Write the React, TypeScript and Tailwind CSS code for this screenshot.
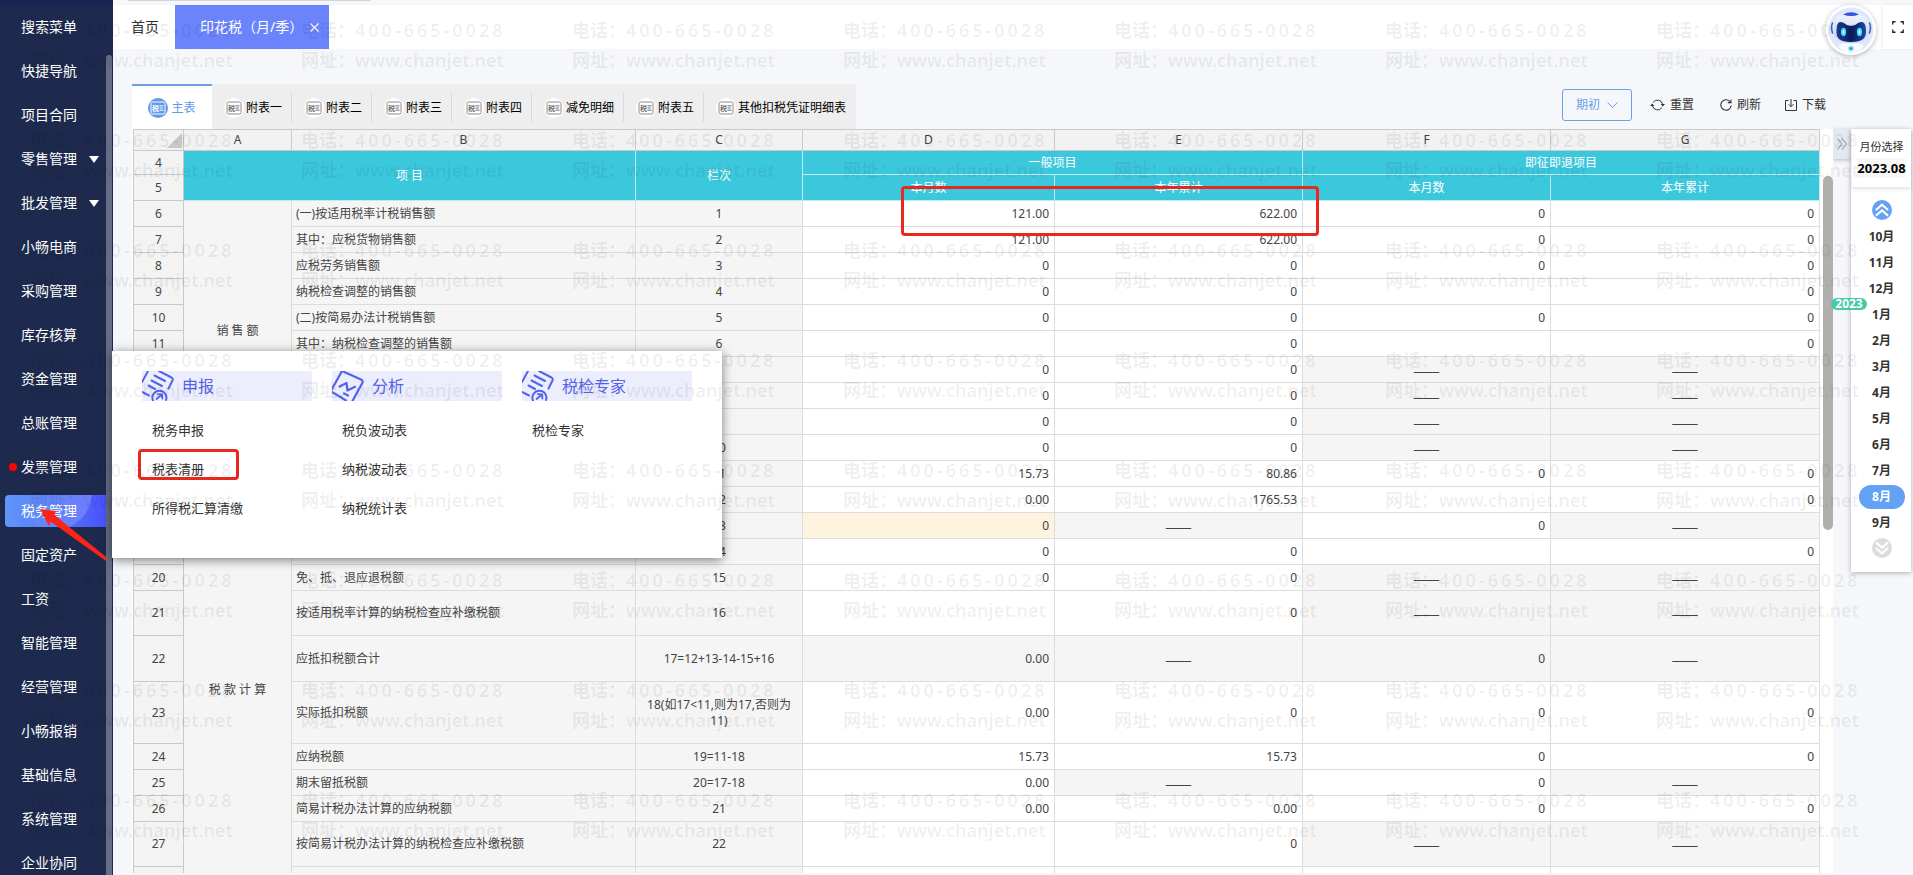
import React from "react";

type CellValue = string;

interface SheetRow {
  no: number;
  height: string;
  group?: { text: string; span: number };
  label: string;
  line: string;
  values: CellValue[];
  shade?: string;
}

const DASH = "——";

const menu: { text: string; arrow?: boolean; dot?: boolean; active?: boolean }[] = [
  { text: "快捷导航" },
  { text: "项目合同" },
  { text: "零售管理", arrow: true },
  { text: "批发管理", arrow: true },
  { text: "小畅电商" },
  { text: "采购管理" },
  { text: "库存核算" },
  { text: "资金管理" },
  { text: "总账管理" },
  { text: "发票管理", dot: true },
  { text: "税务管理", active: true },
  { text: "固定资产" },
  { text: "工资" },
  { text: "智能管理" },
  { text: "经营管理" },
  { text: "小畅报销" },
  { text: "基础信息" },
  { text: "系统管理" },
  { text: "企业协同" },
];

const sheetTabs = ["附表一", "附表二", "附表三", "附表四", "减免明细", "附表五", "其他扣税凭证明细表"];

const H = "h-[26px]";

/* shade: one letter per value column; w = white, g = grey, y = yellow */
const rows: SheetRow[] = [
  { no: 6, height: H, group: { text: "销 售 额", span: 10 }, label: "(一)按适用税率计税销售额", line: "1", values: ["121.00", "622.00", "0", "0"] },
  { no: 7, height: H, label: "其中：应税货物销售额", line: "2", values: ["121.00", "622.00", "0", "0"] },
  { no: 8, height: H, label: "应税劳务销售额", line: "3", values: ["0", "0", "0", "0"] },
  { no: 9, height: H, label: "纳税检查调整的销售额", line: "4", values: ["0", "0", "", "0"] },
  { no: 10, height: H, label: "(二)按简易办法计税销售额", line: "5", values: ["0", "0", "0", "0"] },
  { no: 11, height: H, label: "其中：纳税检查调整的销售额", line: "6", values: ["", "0", "", "0"] },
  { no: 12, height: H, label: "(三)免、抵、退办法出口销售额", line: "7", values: ["0", "0", DASH, DASH] },
  { no: 13, height: H, label: "(四)免税销售额", line: "8", values: ["0", "0", DASH, DASH] },
  { no: 14, height: H, label: "其中：免税货物销售额", line: "9", values: ["0", "0", DASH, DASH] },
  { no: 15, height: H, label: "免税劳务销售额", line: "10", values: ["0", "0", DASH, DASH] },
  { no: 16, height: H, group: { text: "税 款 计 算", span: 13 }, label: "销项税额", line: "11", values: ["15.73", "80.86", "0", "0"] },
  { no: 17, height: H, label: "进项税额", line: "12", values: ["0.00", "1765.53", "", "0"] },
  { no: 18, height: H, label: "上期留抵税额", line: "13", values: ["0", DASH, "0", DASH], shade: "ygwg" },
  { no: 19, height: H, label: "进项税额转出", line: "14", values: ["0", "0", "", "0"] },
  { no: 20, height: H, label: "免、抵、退应退税额", line: "15", values: ["0", "0", DASH, DASH] },
  { no: 21, height: "h-[45px]", label: "按适用税率计算的纳税检查应补缴税额", line: "16", values: ["", "0", DASH, DASH] },
  { no: 22, height: "h-[46px]", label: "应抵扣税额合计", line: "17=12+13-14-15+16", values: ["0.00", DASH, "0", DASH], shade: "gggg" },
  { no: 23, height: "h-[62px]", label: "实际抵扣税额", line: "18(如17<11,则为17,否则为11)", values: ["0.00", "0", "0", "0"] },
  { no: 24, height: H, label: "应纳税额", line: "19=11-18", values: ["15.73", "15.73", "0", "0"] },
  { no: 25, height: H, label: "期末留抵税额", line: "20=17-18", values: ["0.00", DASH, "0", DASH] },
  { no: 26, height: H, label: "简易计税办法计算的应纳税额", line: "21", values: ["0.00", "0.00", "0", "0"] },
  { no: 27, height: "h-[45px]", label: "按简易计税办法计算的纳税检查应补缴税额", line: "22", values: ["", "0", DASH, DASH] },
];

const months = ["10月", "11月", "12月", "1月", "2月", "3月", "4月", "5月", "6月", "7月", "8月", "9月"];

function FormIcon({ active = false }: { active?: boolean }) {
  const ink = active ? "#ffffff" : "#6f6f6f";
  return (
    <svg className="size-5 shrink-0" viewBox="0 0 20 20" aria-hidden="true">
      <circle cx="10" cy="10" r="10" fill={active ? "#5b9be8" : "#ffffff"} />
      <rect x="3" y="4" width="14" height="12" rx="1.5" fill="none" stroke={active ? "#ffffff" : "#8c8c8c"} />
      <text x="4" y="12.6" fontSize="7" fill={ink} fontFamily="Noto Sans CJK SC, sans-serif" fontWeight="700">
        税
      </text>
      <path d="M11.5 7.8h4M11.5 10h3.4M11.5 12.2h4" stroke={ink} strokeWidth="1" />
    </svg>
  );
}

function DeclareIcon() {
  return (
    <svg className="h-[30px] w-8 shrink-0" viewBox="0 0 32 30" fill="none" stroke="#5463ec" strokeWidth="2" strokeLinecap="round" strokeLinejoin="round" aria-hidden="true">
      <path d="M6 0L0 11M0 21L7 24.500M17 0L29.500 6.500Q31.500 7.700 30.500 9.500L26.500 17.500" />
      <path d="M12.500 4.500L23 10M9.500 9.500L20 15M6.500 14.500L13 18" />
      <path d="M11 29.500A7 7 0 1 1 24 29" />
      <path d="M14.500 28L20 23.500M15.800 23.200L20.200 23.300L20.400 27.500" strokeWidth="1.800" />
    </svg>
  );
}

function AnalyseIcon() {
  return (
    <svg className="h-[30px] w-8 shrink-0" viewBox="0 0 32 30" fill="none" stroke="#5463ec" strokeWidth="2.200" strokeLinecap="round" strokeLinejoin="round" aria-hidden="true">
      <path d="M10 0L29 8.500Q31.500 9.800 30.300 12L20.500 30M10 0L0 18M0 21L14 29.500" />
      <path d="M7.500 15.500L14.500 12L15.500 19.500L23 15.800" />
      <path d="M12 22.500L16 24.500" />
    </svg>
  );
}

function Robot() {
  return (
    <svg className="size-full" viewBox="0 0 50 50" aria-hidden="true">
      <defs>
        <linearGradient id="shell" x1="0" y1="0" x2="0" y2="1">
          <stop offset="0" stopColor="#f3f6ff" />
          <stop offset="1" stopColor="#c3d0f4" />
        </linearGradient>
        <linearGradient id="visor" x1="0" y1="0" x2="1" y2="0">
          <stop offset="0" stopColor="#1a3f96" />
          <stop offset="0.500" stopColor="#0a1c5c" />
          <stop offset="1" stopColor="#1b48a8" />
        </linearGradient>
      </defs>
      <circle cx="25" cy="25" r="25" fill="#ffffff" />
      <circle cx="25" cy="25" r="22.500" fill="#dfe7fa" />
      <path d="M12 41Q25 33 38 41Q33 47.500 25 47.500Q17 47.500 12 41z" fill="#f9fbff" />
      <ellipse cx="25" cy="23" rx="19" ry="15.500" fill="url(#shell)" />
      <path d="M6.500 18Q4.500 22 6.500 28M43.500 18Q45.500 22 43.500 28" stroke="#3b62c9" strokeWidth="1.600" fill="none" strokeLinecap="round" />
      <path d="M17 9.500Q25 5 33 9.500Q25 12.500 17 9.500z" fill="#2f57dc" />
      <path d="M11 21Q12 15 18 18Q21 21 25 21Q29 21 32 18Q38 15 39.500 21Q42 34 33 36Q25 38 17 36Q8.500 34 11 21z" fill="url(#visor)" />
      <ellipse cx="17.500" cy="27" rx="2.600" ry="4.200" fill="#3fd6f8" />
      <ellipse cx="33.500" cy="27" rx="2.600" ry="4.200" fill="#3fd6f8" />
      <ellipse cx="17.500" cy="27" rx="1" ry="2.200" fill="#c9f8ff" />
      <ellipse cx="33.500" cy="27" rx="1" ry="2.200" fill="#c9f8ff" />
      <circle cx="25" cy="43.500" r="3" fill="#a7e2fa" />
      <circle cx="25" cy="43.500" r="1.500" fill="#1e9be0" />
    </svg>
  );
}

function Sidebar() {
  return (
    <aside className="flex w-[113px] shrink-0 flex-col overflow-hidden bg-[#1d2a4d] text-sm text-white">
      <div className="h-[5px] shrink-0 bg-[#1a2452]" />
      <button type="button" className="h-11 shrink-0 pl-[21px] text-left">
        搜索菜单
      </button>
      <div className="flex min-h-0 flex-1">
        <nav className="min-w-0 flex-1 overflow-hidden">
          <ul>
            {menu.map((m) => (
              <li key={m.text} className="flex h-11 items-center pl-[5px]">
                <a
                  href="#"
                  className={
                    m.active
                      ? "relative flex h-8 flex-1 items-center overflow-hidden rounded-l-sm bg-linear-to-r from-[#6196f9] to-[#4a52fb] pl-4"
                      : "relative flex h-8 flex-1 items-center pl-4"
                  }
                >
                  {m.active && <span className="absolute -top-10 left-3 size-[75px] rounded-full bg-linear-to-r from-white/0 to-white/20" />}
                  {m.dot && <span className="absolute left-1 size-2 rounded-full bg-[#fb0404]" />}
                  <span className="relative">{m.text}</span>
                  {m.arrow && (
                    <svg className="ml-3 h-[7px] w-2.5" viewBox="0 0 10 7" aria-hidden="true">
                      <path d="M0 0H10L5 7z" fill="#fff" />
                    </svg>
                  )}
                </a>
              </li>
            ))}
          </ul>
        </nav>
        <div className="mt-1.5 mr-px w-1.5 rounded-t-full bg-[#646c86]" />
      </div>
    </aside>
  );
}

function TopBar() {
  return (
    <header className="shrink-0">
      <div className="h-[5px] pl-[15px]">
        <div className="h-px w-[243px] bg-[#d6d6da]" />
      </div>
      <div className="flex h-11 items-stretch bg-white text-sm">
        <a href="#" className="flex items-center pr-4 pl-[18px] text-[#333]">
          首页
        </a>
        <div className="flex items-center bg-[#6b84fb] pr-2.5 pl-[25px] text-white">
          <a href="#">印花税（月/季）</a>
          <button type="button" aria-label="关闭" className="ml-[7px]">
            <svg className="size-[9px]" viewBox="0 0 9 9" aria-hidden="true">
              <path d="M0.500 0.500L8.500 8.500M8.500 0.500L0.500 8.500" stroke="#fff" strokeWidth="1.200" />
            </svg>
          </button>
        </div>
        <div className="relative ml-auto w-[50px]">
          <button type="button" aria-label="智能助手" className="absolute top-0 left-0 size-[50px] rounded-full shadow-[0_1px_5px_rgba(0,0,0,0.3)]">
            <Robot />
          </button>
        </div>
        <button type="button" aria-label="全屏" className="ml-[7px] flex w-[30px] items-center justify-center bg-white shadow-[-1px_0_3px_rgba(0,0,0,0.08)]">
          <svg className="size-3" viewBox="0 0 12 12" fill="none" stroke="#222" strokeWidth="1.300" aria-hidden="true">
            <path d="M0.750 3.500V0.750H3.500M8.500 0.750H11.250V3.500M11.250 8.500V11.250H8.500M3.500 11.250H0.750V8.500" />
          </svg>
        </button>
      </div>
    </header>
  );
}

function SheetToolbar() {
  return (
    <div className="flex h-[45px] shrink-0 items-stretch justify-between pr-[7px] text-xs">
      <div className="flex bg-[#eeeeee]" role="tablist">
        <button type="button" role="tab" aria-selected="true" className="flex w-20 items-center justify-center gap-[3px] border-t-2 border-[#6ba0e6] bg-white text-[#5b9be8]">
          <FormIcon active />
          主表
        </button>
        {sheetTabs.map((t, i) => (
          <button key={t} type="button" role="tab" aria-selected="false" className="relative flex items-center gap-0.5 pt-0.5 pr-2.5 pl-3 text-black">
            <FormIcon />
            {t}
            {i < sheetTabs.length - 1 && <span className="absolute top-2 right-0 h-[30px] w-px bg-[#dadada]" />}
          </button>
        ))}
      </div>
      <div className="flex items-center pb-1 text-[#333]">
        <button type="button" className="mr-[18px] flex h-8 items-center gap-[7px] rounded-[3px] border border-[#6ba0e6] px-[13px] text-[#6ba0e6]">
          期初
          <svg className="h-1.5 w-[11px]" viewBox="0 0 11 6" fill="none" stroke="#6ba0e6" aria-hidden="true">
            <path d="M0.500 0.500L5.500 5.300L10.500 0.500" />
          </svg>
        </button>
        <button type="button" className="mr-[26px] flex items-center gap-[5px]">
          <svg className="h-3 w-[15px]" viewBox="0 0 15 12" fill="none" stroke="#333" aria-hidden="true">
            <path d="M3.200 3.300A5.200 5.200 0 0 1 12.600 5.500M11.800 8.700A5.200 5.200 0 0 1 2.400 6.500" />
            <path d="M10.700 5H15L12.800 7.600zM4.300 7H0L2.200 4.400z" fill="#333" stroke="none" />
          </svg>
          重置
        </button>
        <button type="button" className="mr-6 flex items-center gap-[5px]">
          <svg className="size-3" viewBox="0 0 12 12" fill="none" stroke="#333" strokeWidth="1.100" aria-hidden="true">
            <path d="M10.400 3.200A5.200 5.200 0 1 0 11.200 6.500" />
            <path d="M11 0.500V3.600H7.800" />
          </svg>
          刷新
        </button>
        <button type="button" className="flex items-center gap-[5px]">
          <svg className="size-3" viewBox="0 0 12 12" fill="none" stroke="#333" strokeWidth="1" aria-hidden="true">
            <path d="M3.500 1.500H0.500V11.500H11.500V1.500H8.500M6 0V7.500M3.500 5.200L6 7.700L8.500 5.200" />
          </svg>
          下载
        </button>
      </div>
    </div>
  );
}

function valueClass(value: string, shade?: string) {
  const fill = shade === "y" ? "bg-[#fdf3df] " : shade === "g" || (!shade && value === DASH) ? "bg-[#f5f5f5] " : "bg-white ";
  return (
    fill +
    (value === DASH
      ? "border-r border-b border-[#dcdcdc] text-center font-['Noto_Sans_CJK_SC',sans-serif] text-base leading-4"
      : "border-r border-b border-[#dcdcdc] pr-[5px] text-right")
  );
}

const letterCell = "h-[22px] border-t border-r border-b border-[#c9c9c9] bg-[#f2f2f2] font-normal";
const rowHead = "border-r border-b border-l border-[#c9c9c9] bg-[#f3f3f3] font-normal";
const teal = "border-r border-b border-[#bfeaf1] bg-[#3cc8dc] font-normal text-white";
const labelCell = "border-r border-b border-[#dcdcdc] bg-[#f5f5f5]";

function Sheet() {
  return (
    <div className="relative mb-0.5 flex min-h-0 flex-1 bg-white">
      <div className="min-w-0 flex-1 overflow-hidden pl-px">
        <table className="w-full table-fixed border-separate border-spacing-0 text-xs leading-4 text-[#444]">
          <colgroup>
            <col className="w-[51px]" />
            <col className="w-[108px]" />
            <col className="w-[344px]" />
            <col className="w-[167px]" />
            <col className="w-[252px]" />
            <col className="w-[248px]" />
            <col className="w-[248px]" />
            <col />
          </colgroup>
          <thead>
            <tr>
              <th className="h-[22px] border border-[#c9c9c9] bg-[#f2f2f2] p-px">
                <svg className="ml-auto size-4" viewBox="0 0 16 16" aria-hidden="true">
                  <path d="M16 1V16H1z" fill="#c6c6c6" />
                </svg>
              </th>
              {["A", "B", "C", "D", "E", "F", "G"].map((c) => (
                <th key={c} scope="col" className={letterCell}>
                  {c}
                </th>
              ))}
            </tr>
            <tr>
              <th scope="row" className={"h-6 " + rowHead}>4</th>
              <th colSpan={2} rowSpan={2} className={teal}>项 目</th>
              <th rowSpan={2} className={teal}>栏次</th>
              <th colSpan={2} className={teal}>一般项目</th>
              <th colSpan={2} className={teal}>即征即退项目</th>
            </tr>
            <tr>
              <th scope="row" className={"h-[26px] " + rowHead}>5</th>
              <th className={teal}>本月数</th>
              <th className={teal}>本年累计</th>
              <th className={teal}>本月数</th>
              <th className={teal}>本年累计</th>
            </tr>
          </thead>
          <tbody>
            {rows.map((r) => (
              <tr key={r.no}>
                <th scope="row" className={r.height + " " + rowHead}>{r.no}</th>
                {r.group && (
                  <td rowSpan={r.group.span} className={labelCell + " text-center"}>
                    {r.group.text}
                  </td>
                )}
                <td className={labelCell + " pl-1"}>{r.label}</td>
                <td className={labelCell + " px-2 text-center break-all"}>{r.line}</td>
                {r.values.map((v, i) => (
                  <td key={i} className={valueClass(v, r.shade?.[i])}>
                    {v}
                  </td>
                ))}
              </tr>
            ))}
            <tr>
              <th className={"h-[52px] " + rowHead} />
              <td className={labelCell} />
              <td className={labelCell} />
              <td className={valueClass("")} />
              <td className={valueClass("")} />
              <td className={valueClass("")} />
              <td className={valueClass("")} />
            </tr>
          </tbody>
        </table>
      </div>
      <div className="w-[13px] shrink-0 pt-[47px] pl-[3px]">
        <div className="h-[354px] rounded-full bg-[#b0afae]" />
      </div>
      <div className="absolute top-[57px] left-[769px] h-[50px] w-[418px] rounded-sm border-3 border-[#e8281e]" />
    </div>
  );
}

function MonthPanel() {
  return (
    <div className="flex w-20 shrink-0 items-start pt-20 pr-0.5">
      <button type="button" aria-label="收起" className="flex h-[30px] w-[18px] shrink-0 items-center justify-center bg-[#e4e8f3] shadow-[0_1px_4px_rgba(0,0,0,0.25)]">
        <svg className="h-3 w-2.5" viewBox="0 0 10 12" fill="none" stroke="#a6abb8" strokeWidth="1.200" aria-hidden="true">
          <path d="M0.500 0.500L5 6L0.500 11.500M5 0.500L9.500 6L5 11.500" />
        </svg>
      </button>
      <div className="relative flex-1 bg-white pb-3.5 pl-px text-center text-[#333] shadow-[0_1px_5px_rgba(0,0,0,0.3)]">
        <div className="flex h-[58px] flex-col items-center pt-2 shadow-[0_2px_4px_rgba(0,0,0,0.12)]">
          <div className="text-[11px] leading-5">月份选择</div>
          <div className="mt-px bg-[#f7f7f7] text-[13px] leading-5 font-bold text-black">2023.08</div>
        </div>
        <button type="button" aria-label="上一页" className="mx-auto mt-[13px] flex size-5 items-center justify-center rounded-full bg-[#62a1f3]">
          <svg className="size-3.5" viewBox="0 0 12 12" fill="none" stroke="#fff" strokeWidth="1.800" aria-hidden="true">
            <path d="M0.800 6L6 1.500L11.200 6M0.800 10.800L6 6.300L11.200 10.800" />
          </svg>
        </button>
        <ul className="mt-1 text-xs font-bold">
          {months.map((m) => (
            <li key={m} className="relative flex h-[26px] items-center justify-center">
              {m === "1月" && (
                <span className="absolute -top-1 -left-[21px] h-3 w-9 rounded-full bg-[#48c9a7] text-[12px] leading-3 text-white">2023</span>
              )}
              <button type="button" className={m === "8月" ? "h-6 w-[46px] rounded-full bg-[#62a1f3] text-white" : "h-6 w-[46px]"}>
                {m}
              </button>
            </li>
          ))}
        </ul>
        <button type="button" aria-label="下一页" className="mx-auto mt-0.5 flex size-5 items-center justify-center rounded-full bg-[#dcdcdc]">
          <svg className="size-3.5" viewBox="0 0 12 12" fill="none" stroke="#fff" strokeWidth="1.800" aria-hidden="true">
            <path d="M0.800 1.200L6 5.700L11.200 1.200M0.800 6L6 10.500L11.200 6" />
          </svg>
        </button>
      </div>
    </div>
  );
}

const flyout = [
  { title: "申报", icon: <DeclareIcon />, items: ["税务申报", "税表清册", "所得税汇算清缴"] },
  { title: "分析", icon: <AnalyseIcon />, items: ["税负波动表", "纳税波动表", "纳税统计表"] },
  { title: "税检专家", icon: <DeclareIcon />, items: ["税检专家"] },
];

function Flyout() {
  return (
    <div className="absolute top-[351px] left-28 grid h-[207px] w-[610px] grid-cols-3 gap-5 bg-white px-[30px] pt-5 shadow-[0_2px_10px_rgba(0,0,0,0.5)]">
      {flyout.map((g) => (
        <section key={g.title}>
          <h2 className="flex h-[30px] items-center gap-2 bg-[#ecedfd] text-base text-[#5463ec]">
            {g.icon}
            {g.title}
          </h2>
          <ul className="mt-2.5 pl-2.5 text-[13px] text-[#333]">
            {g.items.map((it) => (
              <li key={it} className="flex h-[39px] items-center">
                <a href="#">{it}</a>
              </li>
            ))}
          </ul>
        </section>
      ))}
      <div className="absolute top-[98px] left-[26px] h-[31px] w-[101px] rounded-sm border-3 border-[#e8281e]" />
    </div>
  );
}

function Watermark() {
  return (
    <div className="pointer-events-none absolute inset-0 overflow-hidden pt-[15px] pl-[30px]" aria-hidden="true">
      <div className="grid w-[1897px] grid-cols-7 text-[18px] leading-[30px] font-semibold text-black/7">
        {Array.from({ length: 56 }, (_, i) => (
          <div key={i} className="h-[110px] whitespace-nowrap">
            <p>
              电话：<span className="tracking-[3px]">400-665-0028</span>
            </p>
            <p>网址：www.chanjet.net</p>
          </div>
        ))}
      </div>
    </div>
  );
}

export default function App() {
  return (
    <div className="relative flex h-screen overflow-hidden bg-[#f5f7fb] font-['Noto_Sans','Noto_Sans_CJK_SC',sans-serif]">
      <Sidebar />
      <div className="flex min-w-0 flex-1 flex-col">
        <TopBar />
        <div className="flex min-h-0 flex-1">
          <main className="flex min-w-0 flex-1 flex-col pt-[35px] pl-[19px]">
            <SheetToolbar />
            <Sheet />
          </main>
          <MonthPanel />
        </div>
      </div>
      <Flyout />
      <Watermark />
      <svg className="pointer-events-none absolute top-[505px] left-9 h-14 w-[70px]" viewBox="0 0 70 56" aria-hidden="true">
        <path d="M4 4L20 6L18.500 10L70 52V56L14.500 16.500L13 21z" fill="#fb2416" />
      </svg>
    </div>
  );
}
